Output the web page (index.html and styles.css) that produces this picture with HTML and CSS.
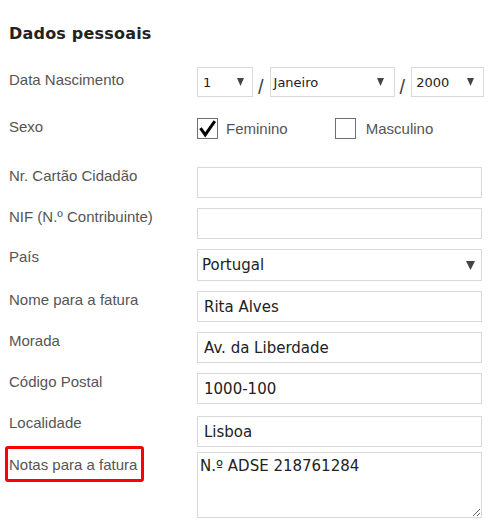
FILE: index.html
```html
<!DOCTYPE html>
<html lang="pt">
<head>
<meta charset="utf-8">
<title>Dados pessoais</title>
<link rel="stylesheet" href="styles.css">
</head>
<body>
<form class="form">
  <h2 class="title">Dados pessoais</h2>

  <div class="row row--date">
    <div class="label label--date">Data Nascimento</div>
    <div class="control control--date">
      <div class="select select--day"><span class="select-text">1</span><svg class="arrow" width="7" height="8" viewBox="0 0 7 8"><polygon points="0,0 7,0 3.5,8" fill="#444"/></svg></div>
      <span class="slash">/</span>
      <div class="select select--month"><span class="select-text">Janeiro</span><svg class="arrow" width="7" height="8" viewBox="0 0 7 8"><polygon points="0,0 7,0 3.5,8" fill="#444"/></svg></div>
      <span class="slash">/</span>
      <div class="select select--year"><span class="select-text">2000</span><svg class="arrow" width="7" height="8" viewBox="0 0 7 8"><polygon points="0,0 7,0 3.5,8" fill="#444"/></svg></div>
    </div>
  </div>

  <div class="row row--sex">
    <div class="label">Sexo</div>
    <div class="control control--sex">
      <div class="check">
        <span class="box"><svg width="21" height="21" viewBox="0 0 21 21"><path d="M3.5 10.2 L8.2 16.8 L17.8 3.2" fill="none" stroke="#000" stroke-width="3"/></svg></span>
        <span class="check-text">Feminino</span>
      </div>
      <div class="check check--second">
        <span class="box"></span>
        <span class="check-text">Masculino</span>
      </div>
    </div>
  </div>

  <div class="row">
    <div class="label">Nr. Cartão Cidadão</div>
    <div class="control"><input class="input" type="text" value=""></div>
  </div>

  <div class="row">
    <div class="label">NIF (N.º Contribuinte)</div>
    <div class="control"><input class="input" type="text" value=""></div>
  </div>

  <div class="row">
    <div class="label label--up2">País</div>
    <div class="control">
      <div class="select select--country"><span class="select-text">Portugal</span><svg class="arrow" width="9" height="9" viewBox="0 0 9 9"><polygon points="0,0 9,0 4.5,9" fill="#444"/></svg></div>
    </div>
  </div>

  <div class="row">
    <div class="label">Nome para a fatura</div>
    <div class="control"><input class="input" type="text" value="Rita Alves"></div>
  </div>

  <div class="row">
    <div class="label">Morada</div>
    <div class="control"><input class="input" type="text" value="Av. da Liberdade"></div>
  </div>

  <div class="row row--postal">
    <div class="label">Código Postal</div>
    <div class="control"><input class="input" type="text" value="1000-100"></div>
  </div>

  <div class="row row--city">
    <div class="label label--up3">Localidade</div>
    <div class="control"><input class="input" type="text" value="Lisboa"></div>
  </div>

  <div class="row">
    <div class="label label--notes"><span class="highlight">Notas para a fatura</span></div>
    <div class="control"><textarea class="textarea">N.º ADSE 218761284</textarea></div>
  </div>
</form>
</body>
</html>
```

FILE: styles.css
```css
html, body {
  margin: 0;
  background: #fff;
}

body {
  padding: 24px 0 0 9px;
}

.form {
  width: 480px;
}

.title {
  margin: 0 0 23px;
  font-family: "DejaVu Sans", Verdana, sans-serif;
  font-weight: bold;
  font-size: 16px;
  line-height: 20px;
  letter-spacing: 0.2px;
  color: #222;
}

.row {
  display: flex;
  align-items: flex-start;
  margin-bottom: 10px;
}

.label {
  width: 188px;
  flex: none;
  margin-top: -1px;
  font-family: "Liberation Sans", Arial, sans-serif;
  font-size: 15px;
  line-height: 20px;
  color: #555;
}

.label--date { margin-top: 3px; }
.label--up2 { margin-top: -2px; }
.label--up3 { margin-top: -3px; }

.label--notes {
  display: flex;
  align-items: flex-start;
  margin-top: -6px;
}

.highlight {
  display: block;
  margin-left: -4px;
  padding: 6px 4px 4px 1px;
  border: 3px solid #ff0000;
  border-radius: 3px;
}

.control {
  width: 285px;
  flex: none;
}

.row--date { margin-bottom: 21px; }

.control--date {
  width: 289px;
  display: flex;
  align-items: flex-end;
}

.select {
  box-sizing: border-box;
  display: flex;
  align-items: center;
  justify-content: space-between;
  height: 30px;
  border: 1px solid #d9d9d9;
  background: #fff;
  font-family: "DejaVu Sans", Verdana, sans-serif;
  font-size: 13px;
  color: #222;
}

.select--day { width: 56px; padding: 0 8px 0 5px; }
.select--month { width: 125px; padding: 0 10px 0 3px; }
.select--year { width: 73px; padding: 0 9px 0 4px; }

.select--country {
  width: 285px;
  height: 32px;
  padding: 0 6px 0 4px;
  font-size: 15px;
}

.arrow {
  display: block;
  flex: none;
}

.slash {
  margin: 0 6px 0 5px;
  font-family: "Liberation Sans", Arial, sans-serif;
  font-size: 20px;
  line-height: 20px;
  color: #444;
}

.row--sex { margin-bottom: 28px; }

.control--sex {
  display: flex;
  align-items: center;
  height: 21px;
}

.check {
  display: flex;
  align-items: center;
  gap: 8px;
}

.check--second {
  margin-left: 47px;
  gap: 10px;
}

.box {
  box-sizing: border-box;
  display: block;
  width: 21px;
  height: 21px;
  border: 1px solid #6f6f6f;
  background: #fff;
}

.box svg {
  display: block;
  margin: -1px 0 0 -1px;
}

.check-text {
  font-family: "Liberation Sans", Arial, sans-serif;
  font-size: 15px;
  line-height: 20px;
  color: #555;
}

.input {
  box-sizing: border-box;
  display: block;
  width: 285px;
  height: 31px;
  margin: 0;
  padding: 0 6px;
  border: 1px solid #d9d9d9;
  border-radius: 0;
  outline: none;
  background: #fff;
  font-family: "DejaVu Sans", Verdana, sans-serif;
  font-size: 15px;
  color: #222;
}

.row--postal { margin-bottom: 12px; }
.row--city { margin-bottom: 5px; }

.textarea {
  box-sizing: border-box;
  display: block;
  width: 285px;
  height: 66px;
  margin: 0;
  padding: 4px 2px;
  border: 1px solid #d9d9d9;
  border-radius: 0;
  outline: none;
  background: #fff;
  font-family: "DejaVu Sans", Verdana, sans-serif;
  font-size: 15px;
  line-height: 18px;
  color: #222;
  resize: both;
}
```
